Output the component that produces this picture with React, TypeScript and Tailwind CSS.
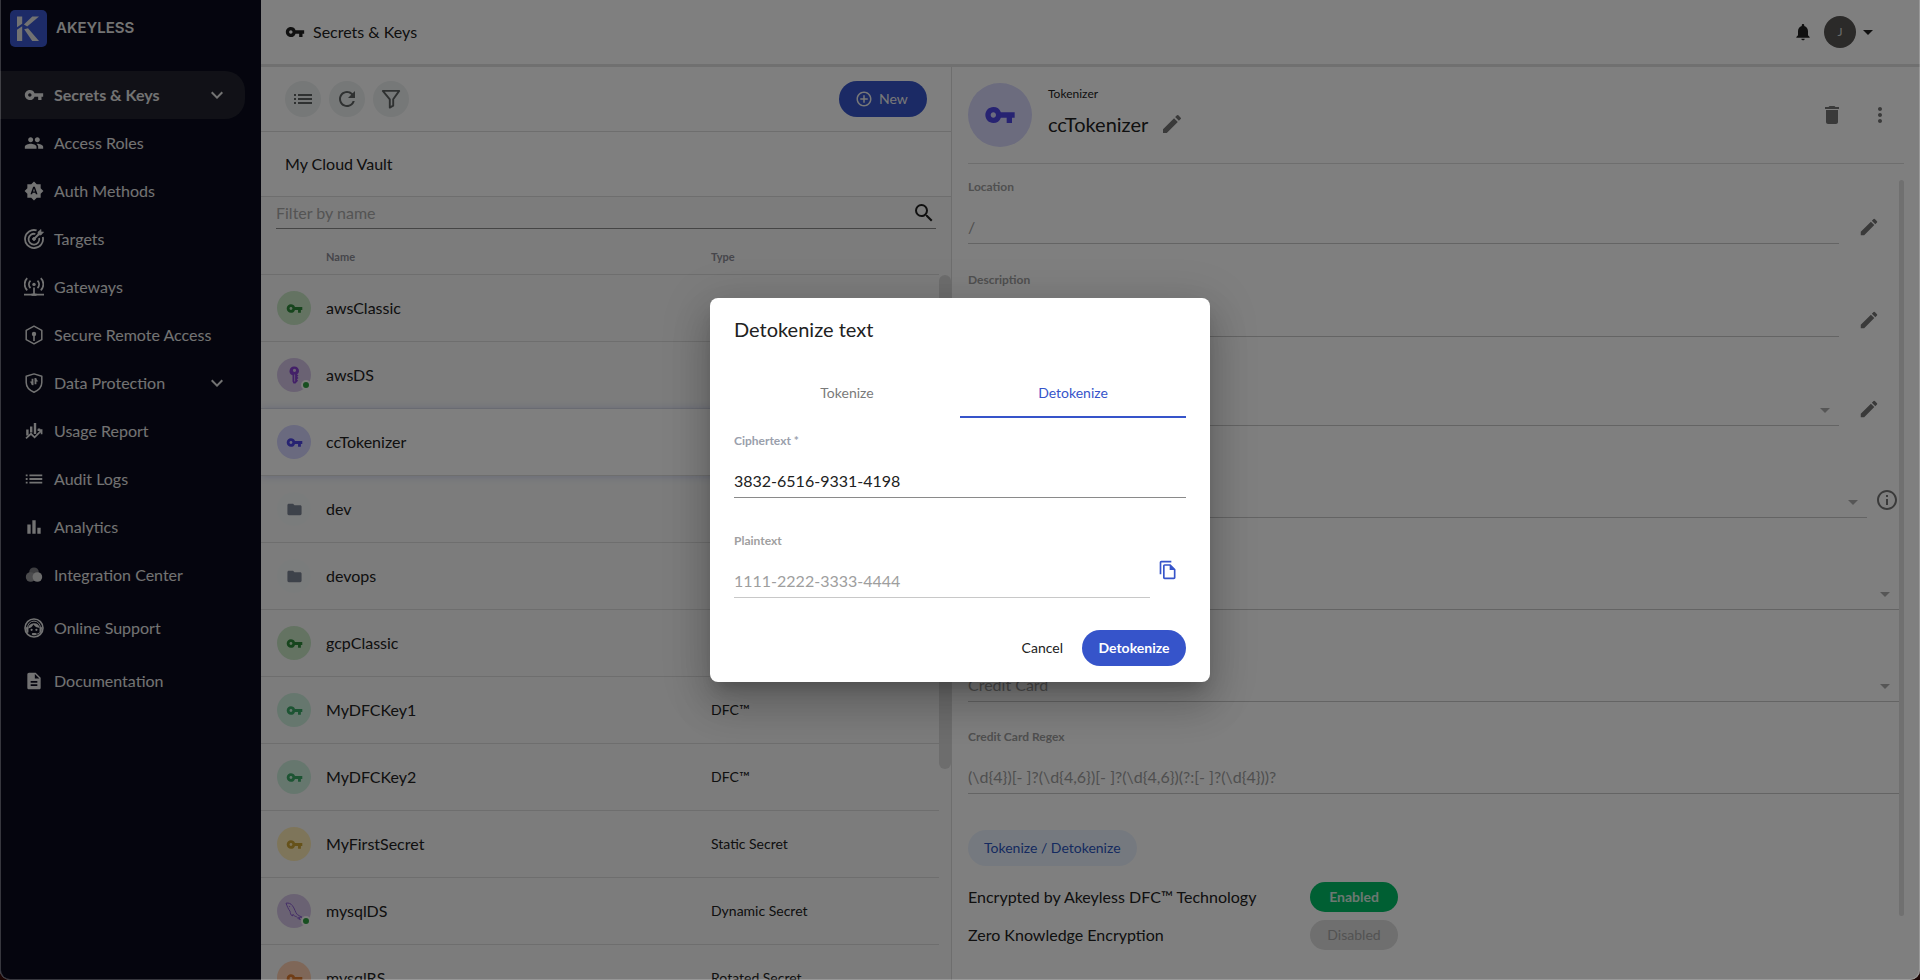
import React, { useState } from "react";
import {
  MdAddCircleOutline,
  MdArrowDropDown,
  MdBarChart,
  MdBrightnessAuto,
  MdDelete,
  MdDescription,
  MdEdit,
  MdFolder,
  MdInfoOutline,
  MdKeyboardArrowDown,
  MdList,
  MdMoreVert,
  MdNotifications,
  MdOutlineFileCopy,
  MdPeople,
  MdRefresh,
  MdSearch,
  MdVpnKey,
} from "react-icons/md";

const TargetIcon = () => (
  <svg viewBox="0 0 20 20" className="size-5" fill="none" stroke="currentColor" strokeWidth="1.8">
    <path d="M12.6 1.4A9 9 0 1 0 18.8 8" />
    <path d="M11.4 5A5.4 5.4 0 1 0 15.2 9" />
    <path d="M10 10l4.5-4.5" strokeWidth="2" />
    <path d="M14 6V3l3-2.6v2.6h2.6L17 6z" fill="currentColor" strokeWidth="0.6" />
    <circle cx="10" cy="10" r="1.4" fill="currentColor" strokeWidth="1" />
  </svg>
);

const GatewayIcon = () => (
  <svg viewBox="0 0 20 20" className="size-5" fill="none" stroke="currentColor" strokeWidth="1.7">
    <path d="M3.2 1.200a8.600 8.600 0 0 0 0 12.200M16.800 1.200a8.600 8.600 0 0 1 0 12.200" />
    <path d="M6.500 3.600a5 5 0 0 0 0 7.400M13.500 3.600a5 5 0 0 1 0 7.400" />
    <circle cx="10" cy="7.4" r="1.7" fill="currentColor" stroke="none" />
    <path d="M10 10.5V17M0 17.6h20" />
    <path d="M7.5 16.6h5v2.2h-5z" fill="currentColor" stroke="none" />
  </svg>
);

const RemoteIcon = () => (
  <svg viewBox="0 0 20 20" className="size-5" fill="none" stroke="currentColor" strokeWidth="1.5">
    <path d="M10 1.2l7.8 4.2v9.2L10 18.8l-7.8-4.2V5.4z" strokeLinejoin="round" />
    <path d="M10 9v7" strokeWidth="1.6" />
    <circle cx="10" cy="9" r="2.2" fill="currentColor" stroke="none" />
  </svg>
);

const ShieldIcon = () => (
  <svg viewBox="0 0 20 20" className="size-5" fill="none" stroke="currentColor" strokeWidth="1.5">
    <path d="M10 .9l7.8 2.3v6.3c0 4.3-2.9 7.6-7.8 9.700-4.900-2.100-7.800-5.400-7.800-9.700V3.200z" strokeLinejoin="round" />
    <path d="M8.500 12V5.800M11.500 5v6.200" strokeWidth="1.800" />
    <path d="M6.400 8.800h2.400v3.400zM13.600 8.200h-2.400V5z" fill="currentColor" strokeWidth=".6" />
  </svg>
);

const UsageIcon = () => (
  <svg viewBox="0 0 20 20" className="size-5" fill="none" stroke="currentColor">
    <path d="M3.400 8.500v6M7.200 5.500v6M11 2v11M15 7.500v2" strokeWidth="2.400" />
    <path d="M2 17.400l5-4.600 3.600 3.600 6.400-6.600M13.600 9.200h4v4" strokeWidth="1.700" />
  </svg>
);

const IntegrationIcon = () => (
  <svg viewBox="0 0 20 20" className="size-5">
    <circle cx="10" cy="7.2" r="4.8" fill="#7c7d82" />
    <circle cx="6.6" cy="12" r="4.8" fill="#97979b" />
    <circle cx="13.4" cy="12" r="4.8" fill="#d9d9d9" />
  </svg>
);

const SupportIcon = () => (
  <svg viewBox="0 0 20 20" className="size-5" fill="none" stroke="currentColor">
    <circle cx="10" cy="10" r="9" strokeWidth="1.600" />
    <path d="M3.600 13.500V9.500a6.400 6.400 0 0 1 12.800 0v4" strokeWidth="1" />
    <path
      d="M4.200 10.500c2.300-.3 4.200-1.700 5.200-3.900 1.300 2 3.500 3.300 6.300 3.400a5.800 5.800 0 0 0-11.500.5z"
      fill="currentColor"
      stroke="none"
    />
    <path d="M1.800 9.200h2.400v5.200l-1.400.2zM18.200 9.200h-2.400v5.200l1.400.2z" fill="currentColor" strokeWidth=".4" />
    <circle cx="7.600" cy="11.800" r="1.100" fill="currentColor" stroke="none" />
    <circle cx="12.400" cy="11.800" r="1.100" fill="currentColor" stroke="none" />
    <path d="M16 14.500c-1 1.200-2.800 1.700-5 1.700" strokeWidth="1.100" />
    <rect x="7.800" y="15" width="4.400" height="2.200" rx="1.100" fill="currentColor" stroke="none" />
  </svg>
);

const FunnelIcon = () => (
  <svg viewBox="0 0 20 20" className="size-5" fill="none" stroke="currentColor" strokeWidth="1.9" strokeLinejoin="round">
    <path d="M1.8 1.9h16.4l-6 8.4v6.4L8.8 18.600v-8.300z" />
  </svg>
);

const UprightKeyIcon = () => (
  <svg viewBox="0 0 18 18" className="size-[18px]" fill="currentColor">
    <path
      fillRule="evenodd"
      d="M9.5.5a4.500 4.500 0 0 1 4.500 4.500c0 1.600-.8 2.700-2 3.500l1.500 1-1.300 1.200 1.300 1.400-1.500 1.200 1 1.400-2.500 2.800H8.500L7.500 15.500V9.200A4.500 4.500 0 0 1 9.500.5zm0 2.200a1.600 1.600 0 1 0 0 3.200 1.600 1.600 0 0 0 0-3.200zM9.300 8.500v7h.8v-7z"
    />
  </svg>
);

const DolphinIcon = () => (
  <svg viewBox="0 0 18 18" className="size-[18px]" fill="none" stroke="currentColor" strokeWidth="1" strokeLinejoin="round">
    <path d="M1 1.2c2.600-.6 5 .4 6.400 2.400 2.400 3 2.700 6.600 4.900 9 1.200 1 3 1.400 4.700 2.600l-3.500.1 1.800 2.200c-2.200-.7-3.300-1.800-4.200-3.200-1.300.4-2.300-.6-3-2l-.9 1.700C5.600 13 5.500 11 5 9.200 3.400 7.200 2 4 1 1.200z" />
    <path d="M4.300 4.200l.7.800" />
  </svg>
);

type IconType = React.ComponentType<{ className?: string }>;

const menuList: { name: string; icon: IconType; size?: string; expand?: boolean; spaced?: boolean }[] = [
  { name: "Secrets & Keys", icon: MdVpnKey, size: "size-5", expand: true },
  { name: "Access Roles", icon: MdPeople, size: "size-5" },
  { name: "Auth Methods", icon: MdBrightnessAuto, size: "size-5" },
  { name: "Targets", icon: TargetIcon },
  { name: "Gateways", icon: GatewayIcon },
  { name: "Secure Remote Access", icon: RemoteIcon },
  { name: "Data Protection", icon: ShieldIcon, expand: true },
  { name: "Usage Report", icon: UsageIcon },
  { name: "Audit Logs", icon: MdList, size: "size-[22px]" },
  { name: "Analytics", icon: MdBarChart, size: "size-5" },
  { name: "Integration Center", icon: IntegrationIcon },
  { name: "Online Support", icon: SupportIcon, spaced: true },
  { name: "Documentation", icon: MdDescription, size: "size-5", spaced: true },
];

const itemList: {
  name: string;
  type?: string;
  icon: IconType;
  color: string;
  online?: boolean;
}[] = [
  { name: "awsClassic", icon: MdVpnKey, color: "bg-[#c8e6c5] text-[#2e8b3a]" },
  { name: "awsDS", icon: UprightKeyIcon, color: "bg-[#d5c5e6] text-[#8640d0]", online: true },
  { name: "ccTokenizer", icon: MdVpnKey, color: "bg-[#d4d4ff] text-[#4f46e5]" },
  { name: "dev", icon: MdFolder, color: "bg-[#f5f8f8] text-[#7b8494]" },
  { name: "devops", icon: MdFolder, color: "bg-[#f5f8f8] text-[#7b8494]" },
  { name: "gcpClassic", icon: MdVpnKey, color: "bg-[#c8e6c5] text-[#2e8b3a]" },
  { name: "MyDFCKey1", type: "DFC™", icon: MdVpnKey, color: "bg-[#cdeedd] text-[#3aa867]" },
  { name: "MyDFCKey2", type: "DFC™", icon: MdVpnKey, color: "bg-[#cdeedd] text-[#3aa867]" },
  { name: "MyFirstSecret", type: "Static Secret", icon: MdVpnKey, color: "bg-[#fdebb4] text-[#cda434]" },
  { name: "mysqlDS", type: "Dynamic Secret", icon: DolphinIcon, color: "bg-[#d5c5e6] text-[#8a5cd0]", online: true },
  { name: "mysqlRS", type: "Rotated Secret", icon: MdVpnKey, color: "bg-[#ffcfb0] text-[#e07a2c]" },
];

export default function App() {
  const [modalState, setModalState] = useState(true);

  return (
    <div className="bg-[#1c0604] font-['Lato','Open_Sans',sans-serif] text-base text-[#212121]">
      <div className="relative flex h-screen overflow-hidden rounded-b-[10px] bg-white">
        <Sidebar />
        <div className="flex min-w-0 flex-1 flex-col">
          <Header />
          <div className="grid min-h-0 flex-1 grid-cols-[690fr_969fr]">
            <ItemList />
            <ItemDetail openModal={() => setModalState(true)} />
          </div>
        </div>
        {modalState && <DetokenizeModal closeModal={() => setModalState(false)} />}
        {/* window frame */}
        <div className="pointer-events-none absolute inset-0 z-20 rounded-b-[10px] border border-t-0 border-white/20" />
      </div>
    </div>
  );
}

const Sidebar = () => (
  <aside className="w-[261px] shrink-0 bg-[#0a0b1c] text-[#e6e6e6]">
    <a href="#home" className="flex h-[71px] items-start gap-[9px] pt-2.5 pl-2.5">
      <svg viewBox="0 0 37 37" className="size-[37px]">
        <rect width="37" height="37" rx="5" fill="#3a56cf" />
        <path d="M7 6.5h5.200v7.200L7 17.200zM7 19.800l5.200-3.600v14.800H7z" fill="#e4e4e4" />
        <path d="M22.3 6.500h6.700L17.200 16.600l-3.300-2z M14.200 19.200l3.800-1L29 31h-6.800z" fill="#e4e4e4" />
      </svg>
      <span className="pt-2 font-['Inter',sans-serif] text-[15px] leading-5 font-semibold">AKEYLESS</span>
    </a>
    <nav className="flex flex-col">
      {menuList.map(({ name, icon: Icon, size, expand, spaced }, index) => (
        <a
          key={name}
          href="#menu"
          className={`mr-4 flex h-12 items-center rounded-r-[20px] pr-4 pl-6 ${
            index === 0 ? "bg-[#22232f] font-bold" : ""
          } ${spaced ? "mt-[5px]" : ""}`}
        >
          <span className="mr-2.5 flex size-5 items-center justify-center">
            <Icon className={`shrink-0 ${size ?? ""}`} />
          </span>
          <span className="flex-1">{name}</span>
          {expand && <MdKeyboardArrowDown className="size-6" />}
        </a>
      ))}
    </nav>
  </aside>
);

const Header = () => (
  <header className="flex h-[67px] shrink-0 items-center border-b-3 border-[#e0e0e0] px-6">
    <MdVpnKey className="size-5" />
    <h1 className="ml-2 flex-1">Secrets &amp; Keys</h1>
    <button aria-label="Notifications" className="mr-[11px]">
      <MdNotifications className="size-5" />
    </button>
    <button aria-label="Account" className="mr-4 flex items-center">
      <span className="flex size-8 items-center justify-center rounded-full bg-[#565452] text-xs text-[#d5d5d5]">
        J
      </span>
      <MdArrowDropDown className="size-6" />
    </button>
  </header>
);

const ToolButton: React.FC<{ label: string; children: React.ReactNode }> = ({ label, children }) => (
  <button
    aria-label={label}
    className="flex size-9 items-center justify-center rounded-full bg-[#ecf0f0] text-[#5f6363]"
  >
    {children}
  </button>
);

const ItemList = () => (
  <section className="flex min-h-0 min-w-0 flex-col bg-[#f8f8f8]">
    <div className="flex h-[65px] shrink-0 items-center gap-2 border-b border-[#dcdcdc] bg-white px-6">
      <ToolButton label="View">
        <MdList className="size-6" />
      </ToolButton>
      <ToolButton label="Refresh">
        <MdRefresh className="size-6" />
      </ToolButton>
      <ToolButton label="Filter">
        <FunnelIcon />
      </ToolButton>
      <button className="ml-auto flex h-9 w-[88px] items-center gap-1.5 rounded-full bg-[#3654ca] px-4 text-sm text-[#f0f0f0]">
        <MdAddCircleOutline className="size-[18px]" />
        New
      </button>
    </div>
    <div className="flex h-[65px] shrink-0 items-center border-b border-[#dcdcdc] bg-white px-6">My Cloud Vault</div>
    <label className="mx-[15px] flex h-8 shrink-0 items-center border-b border-[#8a8a8a]">
      <input
        placeholder="Filter by name"
        aria-label="Filter by name"
        className="min-w-0 flex-1 outline-0 placeholder:text-[#a8a8a8]"
      />
      <MdSearch className="size-6" />
    </label>
    <div className="flex min-h-0 flex-1 overflow-hidden">
      <div className="min-w-0 flex-1">
        <table className="w-full table-fixed border-separate border-spacing-0 text-left">
          <thead>
            <tr className="text-[11px] text-[#8c8c96]">
              <th className="h-[46px] w-[65px] border-b border-[#dcdcdc]"></th>
              <th className="border-b border-[#dcdcdc] pt-3 font-bold">Name</th>
              <th className="w-[228px] border-b border-[#dcdcdc] pt-3 font-bold">Type</th>
            </tr>
          </thead>
          <tbody>
            {itemList.map(({ name, type, icon: Icon, color, online }) => (
              <tr key={name} className={name === "ccTokenizer" ? "bg-white shadow-[0_0_8px_#c8d0f0]" : ""}>
                <td className="h-[67px] border-b border-[#dcdcdc] pl-4">
                  <span className={`relative flex size-[34px] items-center justify-center rounded-full ${color}`}>
                    <Icon className="size-[17px]" />
                    {online && (
                      <span className="absolute right-0 bottom-0.5 size-2.5 rounded-full border-2 border-[#f8f8f8] bg-[#2f9e41]" />
                    )}
                  </span>
                </td>
                <td className="border-b border-[#dcdcdc]">{name}</td>
                <td className="border-b border-[#dcdcdc] text-sm">{type}</td>
              </tr>
            ))}
          </tbody>
        </table>
      </div>
      <div className="w-3 pt-[46px]">
        <div className="h-[70%] rounded-full bg-[#dadada]" />
      </div>
    </div>
  </section>
);

const Field: React.FC<{
  id: string;
  label: string;
  value?: string;
  disabled?: boolean;
  select?: boolean;
}> = ({ id, label, value = "", disabled = false, select = false }) => (
  <div className="flex min-w-0 flex-1 flex-col gap-3">
    <label
      htmlFor={id}
      className={`text-xs leading-[22px] font-bold ${disabled ? "text-[#a0a0a0]" : "text-[#9aa0ac]"}`}
    >
      {label}
    </label>
    {select ? (
      <div className="relative">
        <select
          id={id}
          disabled
          className="h-[34px] w-full appearance-none border-b border-[#c8c8c8] text-[#9e9e9e]"
        >
          <option>{value}</option>
        </select>
        <MdArrowDropDown className="absolute top-1.5 right-0.5 size-6 text-[#adadad]" />
      </div>
    ) : (
      <input
        id={id}
        defaultValue={value}
        disabled={disabled}
        className={`h-[34px] w-full border-b outline-0 ${
          disabled ? "border-[#c8c8c8] text-[#9e9e9e]" : "border-[#8a8a8a]"
        }`}
      />
    )}
  </div>
);

const EditButton: React.FC<{ label: string }> = ({ label }) => (
  <button aria-label={label} className="mx-[19px] mt-10 text-[#757575]">
    <MdEdit className="size-[22px]" />
  </button>
);

const ItemDetail: React.FC<{ openModal: () => void }> = ({ openModal }) => (
  <section className="flex min-h-0 min-w-0 flex-col border-l border-[#dcdcdc] px-4">
    <div className="flex h-[97px] shrink-0 items-center border-b border-[#dcdcdc]">
      <span className="flex size-16 items-center justify-center rounded-full bg-[#d8d8fd] text-[#4f46e5]">
        <MdVpnKey className="size-8" />
      </span>
      <div className="ml-4 flex-1 pb-2">
        <p className="text-xs leading-5">Tokenizer</p>
        <div className="mt-1.5 flex items-center gap-3">
          <h2 className="text-xl leading-7">ccTokenizer</h2>
          <button aria-label="Rename" className="text-[#757575]">
            <MdEdit className="size-6" />
          </button>
        </div>
      </div>
      <button aria-label="Delete" className="mr-6 text-[#757575]">
        <MdDelete className="size-6" />
      </button>
      <button aria-label="More" className="mr-3 text-[#757575]">
        <MdMoreVert className="size-6" />
      </button>
    </div>
    <div className="flex min-h-0 flex-1">
      <div className="min-w-0 flex-1 pt-3">
        <div className="mb-[25px] flex items-start">
          <Field id="location" label="Location" value="/" disabled />
          <EditButton label="Edit location" />
        </div>
        <div className="mb-[21px] flex items-start">
          <Field id="description" label="Description" disabled />
          <EditButton label="Edit description" />
        </div>
        <div className="mb-6 flex items-start">
          <Field id="tags" label="Tags" disabled select />
          <EditButton label="Edit tags" />
        </div>
        <div className="mb-6 flex items-start">
          <Field id="protection" label="Delete Protection" disabled select />
          <MdInfoOutline className="mt-[38px] ml-2 size-6 text-[#757575]" />
        </div>
        <div className="mb-6 flex">
          <Field id="key" label="Encryption Key" disabled select />
        </div>
        <div className="mb-6 flex">
          <Field id="template" label="Template" value="Credit Card" disabled select />
        </div>
        <div className="mb-9 flex">
          <Field
            id="regex"
            label="Credit Card Regex"
            value="(\d{4})[- ]?(\d{4,6})[- ]?(\d{4,6})(?:[- ]?(\d{4}))?"
            disabled
          />
        </div>
        <button onClick={openModal} className="h-9 rounded-full bg-[#ebf3ff] px-4 text-sm text-[#2a55c0]">
          Tokenize / Detokenize
        </button>
        <dl className="mt-4 grid grid-cols-[342px_88px] items-center gap-y-2">
          <dt>Encrypted by Akeyless DFC™ Technology</dt>
          <dd className="rounded-full bg-[#00be66] text-center text-sm leading-[30px] font-bold text-[#d8f0e2]">
            Enabled
          </dd>
          <dt>Zero Knowledge Encryption</dt>
          <dd className="rounded-full bg-[#dedede] text-center text-sm leading-[30px] text-[#a6a6a6]">Disabled</dd>
        </dl>
      </div>
      <div className="w-[5px] pt-4">
        <div className="h-[92%] rounded-full bg-[#e0e0e0]" />
      </div>
    </div>
  </section>
);

// modal with the dimmed backdrop
const DetokenizeModal: React.FC<{ closeModal: () => void }> = ({ closeModal }) => (
  <div className="absolute inset-0 z-10 flex items-center justify-center bg-black/50">
    <div
      role="dialog"
      aria-label="Detokenize text"
      className="w-[500px] rounded-lg bg-white px-6 py-4 shadow-[0_11px_15px_-7px_rgba(0,0,0,0.2),0_24px_38px_3px_rgba(0,0,0,0.14),0_9px_46px_8px_rgba(0,0,0,0.12)]"
    >
      <h2 className="text-xl leading-[30px]">Detokenize text</h2>
      <div role="tablist" className="mt-[26px] mb-3 grid grid-cols-2 text-sm">
        <button role="tab" className="h-12 border-b-2 border-transparent text-[#7a7a7a]">
          Tokenize
        </button>
        <button role="tab" aria-selected className="h-12 border-b-2 border-[#3654ca] text-[#3654ca]">
          Detokenize
        </button>
      </div>
      <Field id="ciphertext" label="Ciphertext *" value="3832-6516-9331-4198" />
      <div className="mt-8 flex items-start">
        <Field id="plaintext" label="Plaintext" value="1111-2222-3333-4444" disabled />
        <button aria-label="Copy" className="mx-2 mt-[30px] text-[#3654ca]">
          <MdOutlineFileCopy className="size-5" />
        </button>
      </div>
      <div className="mt-8 flex items-center justify-end gap-[19px] text-sm">
        <button onClick={closeModal}>Cancel</button>
        <button className="h-9 w-[104px] rounded-full bg-[#3654ca] font-bold text-white">Detokenize</button>
      </div>
    </div>
  </div>
);
